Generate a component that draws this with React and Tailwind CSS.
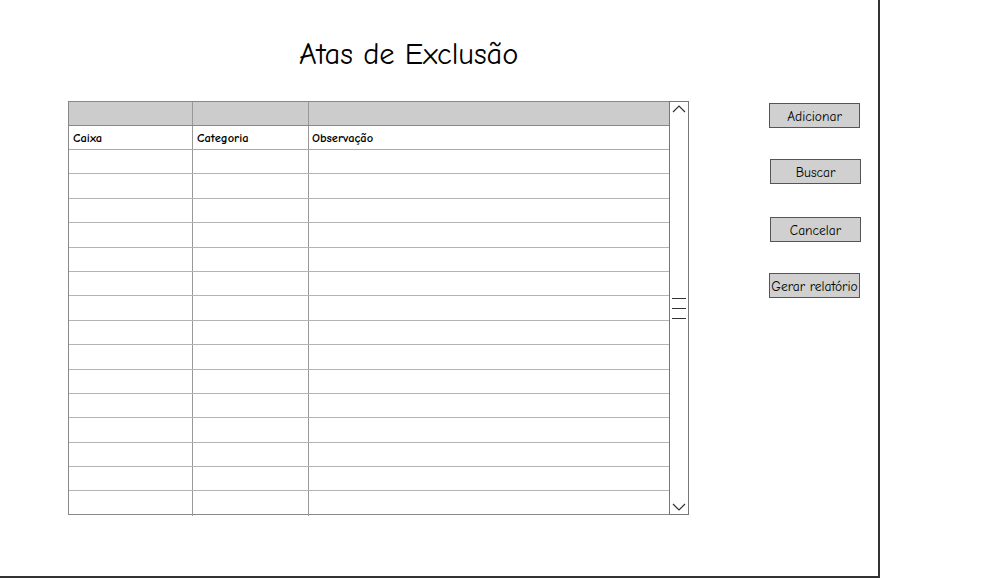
import React from 'react';

const font = { fontFamily: '"Comic Neue", "Comic Sans MS", "DejaVu Sans", sans-serif' };

function Scrollbar() {
  return (
    <div className="w-[20px] h-[414px] border border-[#777] flex flex-col justify-between items-center bg-white">
      <svg width="16" height="12" viewBox="0 0 16 12" className="mt-[1px]">
        <path d="M2 9 L8 3 L14 9" fill="none" stroke="#333" strokeWidth="1.2" />
      </svg>
      <div className="flex flex-col gap-[9px] items-center">
        <div className="w-[14px] h-px bg-[#333]" />
        <div className="w-[14px] h-px bg-[#333]" />
        <div className="w-[14px] h-px bg-[#333]" />
      </div>
      <svg width="16" height="12" viewBox="0 0 16 12" className="mb-[1px]">
        <path d="M2 3 L8 9 L14 3" fill="none" stroke="#333" strokeWidth="1.2" />
      </svg>
    </div>
  );
}

function DataTable() {
  const rows = Array.from({ length: 15 });
  const cols = 'grid grid-cols-[124px_116px_361px]';
  return (
    <div className="w-[601px] h-[414px] border border-[#888] border-r-0 bg-white">
      <div className={`${cols} h-[24px] bg-[#cccccc] border-b border-[#888]`}>
        <div className="border-r border-[#999]" />
        <div className="border-r border-[#999]" />
        <div />
      </div>
      <div className={`${cols} h-[24px] border-b border-[#aaa] text-[12.5px] font-black text-black`}>
        <div className="border-r border-[#999] pl-[4px] pt-[2px] flex items-center">Caixa</div>
        <div className="border-r border-[#999] pl-[4px] pt-[2px] flex items-center">Categoria</div>
        <div className="pl-[3px] pt-[2px] flex items-center">Observação</div>
      </div>
      {rows.map((_, i) => (
        <div key={i} className={`${cols} h-[24.4px] ${i < rows.length - 1 ? 'border-b border-[#b4b4b4]' : ''}`}>
          <div className="border-r border-[#999]" />
          <div className="border-r border-[#999]" />
          <div />
        </div>
      ))}
    </div>
  );
}

function Btn({ children, className = '' }) {
  return (
    <div className={`w-[91px] h-[25px] pt-[3px] bg-[#d0d0d0] border border-[#555] flex items-center justify-center text-[13.5px] text-black ${className}`}>
      {children}
    </div>
  );
}

export default function App() {
  return (
    <div className="w-[997px] h-[579px] bg-white overflow-hidden" style={font}>
      <div className="w-[880px] h-[578px] border-r-2 border-b-2 border-[#333]">
        <h1 className="pt-[36px] pl-[299px] text-[30.5px] leading-[38px] text-black">Atas de Exclusão</h1>
        <div className="flex pl-[68px] mt-[27px]">
          <DataTable />
          <Scrollbar />
          <div className="ml-[80px] mt-[2px] flex flex-col">
            <Btn>Adicionar</Btn>
            <Btn className="mt-[31px] ml-[1px]">Buscar</Btn>
            <Btn className="mt-[33px] ml-[1px]">Cancelar</Btn>
            <Btn className="mt-[31px]">Gerar relatório</Btn>
          </div>
        </div>
      </div>
    </div>
  );
}
